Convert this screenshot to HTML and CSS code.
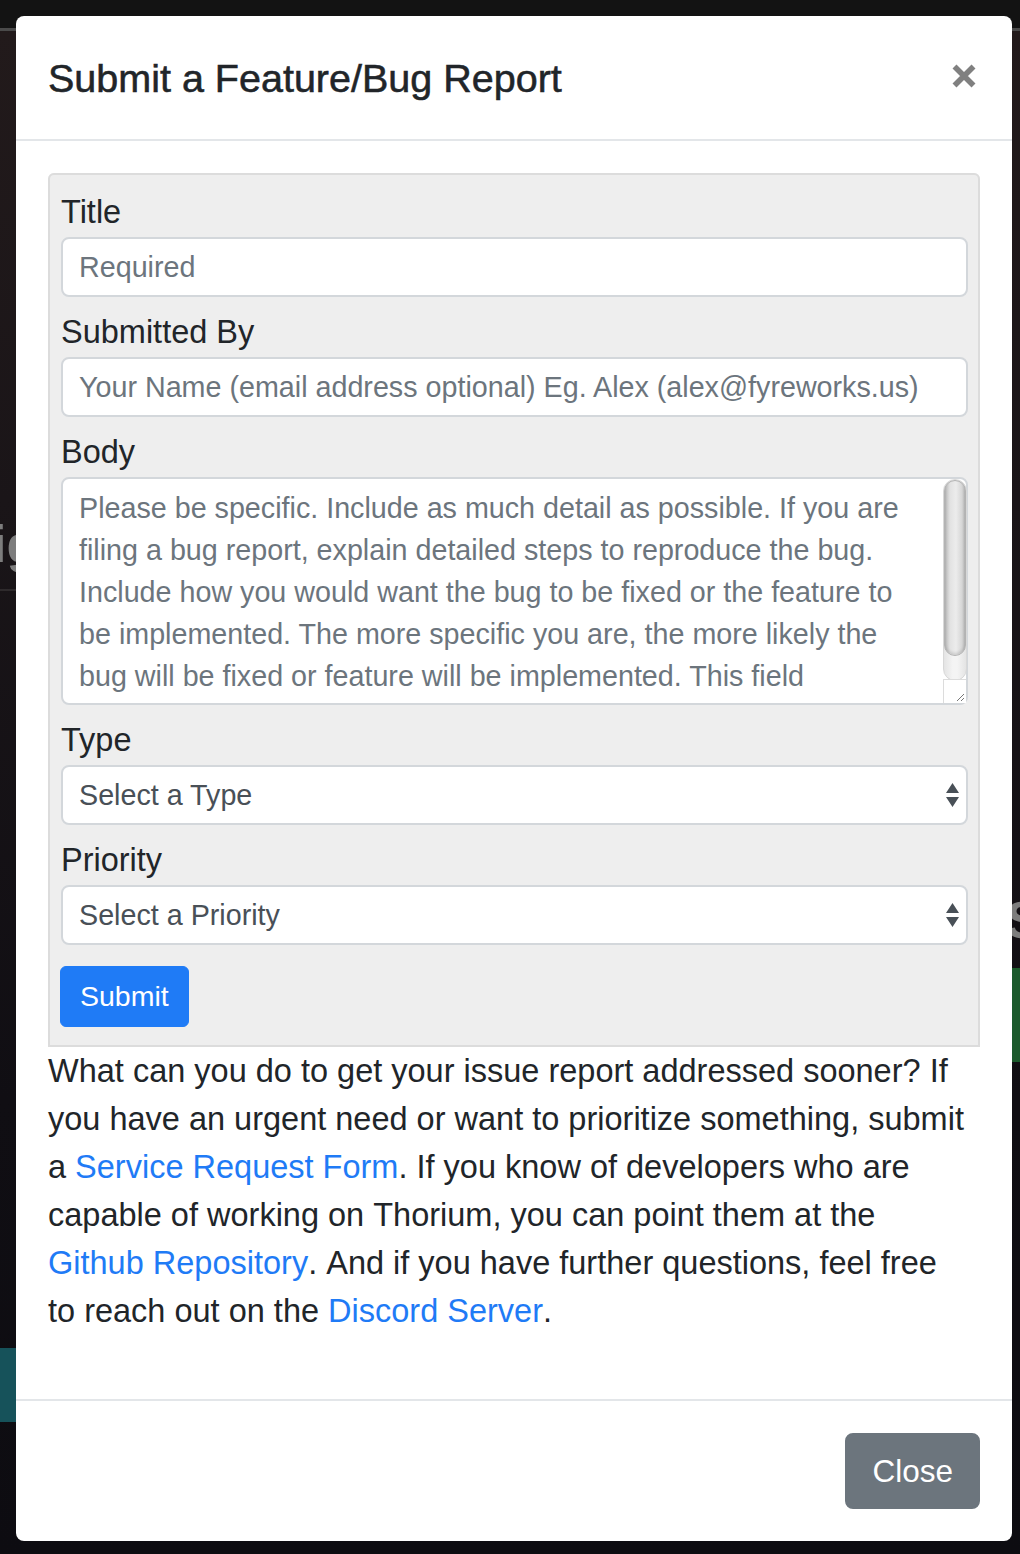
FILE: index.html
```html
<!DOCTYPE html>
<html lang="en">
<head>
<meta charset="utf-8">
<title>Submit a Feature/Bug Report</title>
<link rel="stylesheet" href="styles.css">
</head>
<body>
<div class="scene" aria-hidden="true">
  <div class="scene-topline"></div>
  <span class="scene-text scene-text-left">ig</span>
  <div class="scene-rule"></div>
  <span class="scene-text scene-text-right">S</span>
  <div class="scene-green"></div>
  <div class="scene-teal"></div>
</div>
<div class="page">
  <div class="modal">
    <div class="modal-header">
      <h5 class="modal-title">Submit a Feature/Bug Report</h5>
      <button class="close" type="button" aria-label="Close">
        <svg width="24" height="24" viewBox="0 0 24 24"><path d="M2.5 2.5 L21.5 21.5 M21.5 2.5 L2.5 21.5" stroke="#808080" stroke-width="5.6" fill="none"/></svg>
      </button>
    </div>
    <div class="modal-body">
      <fieldset class="report-form">
        <label class="form-label" for="title">Title</label>
        <input class="form-control" id="title" type="text" placeholder="Required">
        <label class="form-label" for="by">Submitted By</label>
        <input class="form-control" id="by" type="text" placeholder="Your Name (email address optional) Eg. Alex (alex@fyreworks.us)">
        <label class="form-label" for="body">Body</label>
        <div class="textarea-wrap">
          <textarea class="form-control form-textarea" id="body" placeholder="Please be specific. Include as much detail as possible. If you are filing a bug report, explain detailed steps to reproduce the bug. Include how you would want the bug to be fixed or the feature to be implemented. The more specific you are, the more likely the bug will be fixed or feature will be implemented. This field"></textarea>
          <div class="fake-scroll"><div class="fake-thumb"></div></div>
          <div class="fake-resizer">
            <svg width="12" height="12" viewBox="0 0 12 12"><path d="M11 4 L4 11 M11 8 L8 11" stroke="#777" stroke-width="1" fill="none"/></svg>
          </div>
        </div>
        <label class="form-label" for="type">Type</label>
        <div class="select-wrap">
          <select class="form-control form-select" id="type"><option>Select a Type</option></select>
          <svg class="select-arrows" width="13" height="25" viewBox="0 0 13 25"><path d="M6.5 0 L13 10 L0 10 Z M0 14 L13 14 L6.5 24 Z" fill="#495057"/></svg>
        </div>
        <label class="form-label" for="priority">Priority</label>
        <div class="select-wrap">
          <select class="form-control form-select" id="priority"><option>Select a Priority</option></select>
          <svg class="select-arrows" width="13" height="25" viewBox="0 0 13 25"><path d="M6.5 0 L13 10 L0 10 Z M0 14 L13 14 L6.5 24 Z" fill="#495057"/></svg>
        </div>
        <button class="btn-submit" type="button">Submit</button>
      </fieldset>
      <p class="help-text">What can you do to get your issue report addressed sooner? If you have an urgent need or want to prioritize something, submit a <a href="#">Service Request Form</a>. If you know of developers who are capable of working on Thorium, you can point them at the <a href="#">Github Repository</a>. And if you have further questions, feel free to reach out on the <a href="#">Discord Server</a>.</p>
    </div>
    <div class="modal-footer">
      <button class="btn-close" type="button">Close</button>
    </div>
  </div>
</div>
</body>
</html>
```
FILE: styles.css
```css
* { box-sizing: border-box; }

html, body {
  margin: 0;
  padding: 0;
}

body {
  width: 1020px;
  height: 1554px;
  overflow: hidden;
  background: linear-gradient(to bottom, #131313 0, #131313 28px, #221a1b 31px, #1a1518 500px, #100e13 1100px, #0d0c11 1554px);
  font-family: "Liberation Sans", Arial, sans-serif;
  color: #212529;
  position: relative;
}

/* dimmed application behind the modal */
.scene {
  position: absolute;
  inset: 0;
  z-index: 0;
}
.scene-topline {
  position: absolute;
  left: 0;
  right: 0;
  top: 28px;
  height: 3px;
  background: #4a4a4a;
}
.scene-text {
  position: absolute;
  font-size: 52px;
  font-weight: bold;
  color: #7d7d7d;
  line-height: 1;
}
.scene-text-left { left: -8px; top: 518px; }
.scene-text-right { left: 1006px; top: 894px; }
.scene-rule {
  position: absolute;
  left: 0;
  width: 20px;
  top: 589px;
  height: 2px;
  background: #2e2a2c;
}
.scene-green {
  position: absolute;
  left: 1008px;
  width: 12px;
  top: 968px;
  height: 94px;
  background: #1b5a2c;
}
.scene-teal {
  position: absolute;
  left: 0;
  width: 20px;
  top: 1348px;
  height: 74px;
  background: #16525a;
}

.page {
  position: relative;
  z-index: 1;
  padding: 16px 8px 0 16px;
}

.modal {
  background: #fff;
  border-radius: 8px;
  overflow: hidden;
}

.modal-header {
  display: flex;
  justify-content: space-between;
  align-items: flex-start;
  padding: 32px 32px 31px 32px;
  border-bottom: 2px solid #e3e6e9;
}
.modal-title {
  margin: 0;
  font-size: 39.5px;
  line-height: 60px;
  font-weight: normal;
  -webkit-text-stroke: 0.55px #212529;
  color: #212529;
}
.close {
  margin: 16px 4px 0 0;
  padding: 0;
  border: 0;
  background: none;
  width: 24px;
  height: 24px;
  display: block;
}
.close svg { display: block; }

.modal-body {
  padding: 32px;
}

.report-form {
  margin: 0;
  min-width: 0;
  background: #eeeeee;
  border: 2px solid #dcdcdc;
  border-radius: 6px 6px 0 0;
  padding: 13px 10px 18px 11px;
}

.form-label {
  display: block;
  font-size: 32.5px;
  line-height: 48px;
  margin: 0 0 1px;
  color: #212529;
}

.form-control {
  display: block;
  width: 100%;
  height: 60px;
  margin: 0 0 11px;
  padding: 0 16px;
  font-family: "Liberation Sans", Arial, sans-serif;
  font-size: 28.7px;
  color: #495057;
  background: #fff;
  border: 2px solid #d3d7db;
  border-radius: 8px;
  outline: none;
}
.form-control::placeholder {
  color: #6c757d;
  opacity: 1;
}

.textarea-wrap {
  position: relative;
  margin: 0 0 11px;
}
.form-textarea {
  height: 228px;
  margin: 0;
  padding: 8px 48px 8px 16px;
  line-height: 42px;
  resize: none;
  overflow: hidden;
}
.fake-scroll {
  position: absolute;
  top: 2px;
  right: 1px;
  width: 24px;
  height: 202px;
  border-radius: 12px;
  background: linear-gradient(to right, #e4e4e4, #f4f4f4 40%, #f4f4f4 60%, #e4e4e4);
  border: 1px solid #d8d8d8;
}
.fake-thumb {
  height: 176px;
  border-radius: 12px;
  background: linear-gradient(to right, #b9b9b9, #e2e2e2 25%, #ececec 55%, #d6d6d6 85%, #b9b9b9);
  border: 1px solid #b3b3b3;
  box-shadow: inset 0 -2px 3px rgba(0,0,0,0.12);
}
.fake-resizer {
  position: absolute;
  right: 2px;
  bottom: 2px;
  width: 23px;
  height: 24px;
  background: #fff;
  border-left: 1px solid #dcdcdc;
  border-top: 1px solid #dcdcdc;
  display: flex;
  align-items: flex-end;
  justify-content: flex-end;
  padding: 0 1px 1px 0;
}
.fake-resizer svg { display: block; }

.select-wrap {
  position: relative;
}
.form-select {
  -webkit-appearance: none;
  appearance: none;
  padding-right: 40px;
}
.select-arrows {
  position: absolute;
  right: 9px;
  top: 18px;
  pointer-events: none;
}

.btn-submit {
  display: block;
  margin: 21px 0 0 -1px;
  padding: 9px 19px;
  font-family: "Liberation Sans", Arial, sans-serif;
  font-size: 28.5px;
  line-height: 41px;
  color: #fff;
  background: #1f7bf6;
  border: 1px solid #1f7bf6;
  border-radius: 6px;
}

.help-text {
  margin: 0 0 32px;
  max-width: 920px;
  font-size: 32.5px;
  line-height: 48px;
  color: #212529;
  font-kerning: none;
}
.help-text a {
  color: #1f7bf6;
  text-decoration: none;
}

.modal-footer {
  display: flex;
  justify-content: flex-end;
  padding: 32px;
  border-top: 2px solid #e3e6e9;
}
.btn-close {
  padding: 12px 25px;
  font-family: "Liberation Sans", Arial, sans-serif;
  font-size: 31.5px;
  line-height: 48px;
  color: #fff;
  background: #6c757d;
  border: 2px solid #6c757d;
  border-radius: 8px;
}
```
